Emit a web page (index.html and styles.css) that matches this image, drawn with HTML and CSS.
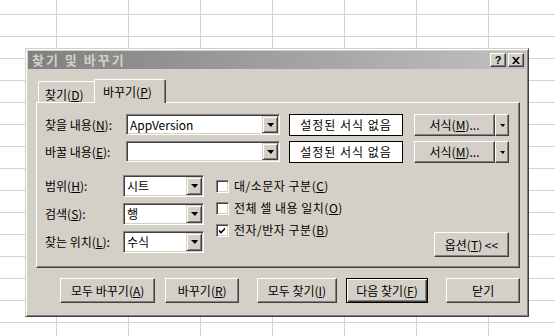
FILE: index.html
```html
<!DOCTYPE html>
<html>

<head>
    <meta charset="UTF-8">
    <title>찾기 및 바꾸기</title>
    <link rel="stylesheet" href="styles.css">
</head>

<body>
    <div class="dialog">
        <div class="titlebar">
            <span class="title">찾기 및 바꾸기</span>
            <div class="caption-buttons">
                <span class="cap-btn help">?</span>
                <span class="cap-btn close">
                    <svg width="8" height="7" viewBox="0 0 8 7">
                        <path d="M0 0h2l2 2.3 2-2.3h2l-3 3.5 3 3.5h-2l-2-2.3-2 2.3h-2l3-3.5z" fill="#000" />
                    </svg>
                </span>
            </div>
        </div>

        <div class="content">
            <div class="tabs">
                <div class="tab">찾기(<u>D</u>)</div>
                <div class="tab active">바꾸기(<u>P</u>)</div>
            </div>

            <div class="panel">
                <div class="field-row">
                    <span class="field-label">찾을 내용(<u>N</u>):</span>
                    <div class="combo combo-wide">
                        <span class="combo-text">AppVersion</span>
                        <span class="drop-btn"><i class="tri"></i></span>
                    </div>
                    <div class="format-preview">설정된 서식 없음</div>
                    <div class="split">
                        <span class="btn format-btn"><span>서식(<u>M</u>)...</span></span>
                        <span class="btn split-arrow"><i class="tri tri-small"></i></span>
                    </div>
                </div>
                <div class="field-row second">
                    <span class="field-label">바꿀 내용(<u>E</u>):</span>
                    <div class="combo combo-wide">
                        <span class="combo-text"></span>
                        <span class="drop-btn"><i class="tri"></i></span>
                    </div>
                    <div class="format-preview">설정된 서식 없음</div>
                    <div class="split">
                        <span class="btn format-btn"><span>서식(<u>M</u>)...</span></span>
                        <span class="btn split-arrow"><i class="tri tri-small"></i></span>
                    </div>
                </div>

                <div class="options">
                    <div class="option-grid">
                        <span class="opt-label">범위(<u>H</u>):</span>
                        <div class="combo combo-small">
                            <span class="combo-text">시트</span>
                            <span class="drop-btn"><i class="tri"></i></span>
                        </div>
                        <span class="opt-label">검색(<u>S</u>):</span>
                        <div class="combo combo-small">
                            <span class="combo-text">행</span>
                            <span class="drop-btn"><i class="tri"></i></span>
                        </div>
                        <span class="opt-label">찾는 위치(<u>L</u>):</span>
                        <div class="combo combo-small">
                            <span class="combo-text">수식</span>
                            <span class="drop-btn"><i class="tri"></i></span>
                        </div>
                    </div>

                    <div class="checks">
                        <div class="check-row">
                            <span class="checkbox"></span>
                            <span>대/소문자 구분(<u>C</u>)</span>
                        </div>
                        <div class="check-row">
                            <span class="checkbox"></span>
                            <span>전체 셀 내용 일치(<u>O</u>)</span>
                        </div>
                        <div class="check-row">
                            <span class="checkbox">
                                <svg width="9" height="9" viewBox="0 0 9 9">
                                    <path d="M1 3.5l2 2 4-4v2.2l-4 4-2-2z" fill="#000" />
                                </svg>
                            </span>
                            <span>전자/반자 구분(<u>B</u>)</span>
                        </div>
                    </div>

                    <span class="btn options-btn"><span>옵션(<u>T</u>) &lt;&lt;</span></span>
                </div>
            </div>

            <div class="actions">
                <span class="btn action w97"><span>모두 바꾸기(<u>A</u>)</span></span>
                <span class="btn action w75 gap10"><span>바꾸기(<u>R</u>)</span></span>
                <span class="btn action w81 gap18"><span>모두 찾기(<u>I</u>)</span></span>
                <span class="btn action default w84 gap9"><span>다음 찾기(<u>F</u>)</span></span>
                <span class="btn action w75 gap18"><span>닫기</span></span>
            </div>
        </div>
    </div>
</body>

</html>
```

FILE: styles.css
```css
/* Spreadsheet behind the dialog */
html,
body {
    margin: 0;
    height: 336px;
    overflow: hidden;
}

body {
    background-color: #ffffff;
    background-image:
        linear-gradient(to right, #d4d4d4 1px, transparent 1px),
        linear-gradient(to bottom, #d4d4d4 1px, transparent 1px);
    background-size: 72px 22px;
    background-position: 56px 14px;
    font-family: "Noto Sans CJK KR", "Noto Sans", sans-serif;
    font-size: 12px;
    line-height: 14px;
    color: #000000;
}

u {
    text-decoration: underline;
    text-underline-offset: 1px;
}

/* Window frame */
.dialog {
    width: 504px;
    height: 269px;
    box-sizing: border-box;
    margin: 48px 0 0 25px;
    background: #d4d0c8;
    border: 1px solid;
    border-color: #d4d0c8 #404040 #404040 #d4d0c8;
    box-shadow: inset 1px 1px #ffffff, inset -1px -1px #808080;
    padding: 2px;
}

.titlebar {
    height: 18px;
    background: linear-gradient(to right, #808080, #c0c0c0);
    display: flex;
    align-items: center;
    justify-content: space-between;
    padding: 0 2px 0 4px;
}

.title {
    color: #d4d0c8;
    font-weight: bold;
    font-size: 13px;
    letter-spacing: 2px;
}

.caption-buttons {
    display: flex;
    gap: 2px;
}

.cap-btn {
    width: 16px;
    height: 14px;
    box-sizing: border-box;
    background: #d4d0c8;
    border: 1px solid;
    border-color: #ffffff #404040 #404040 #ffffff;
    box-shadow: inset -1px -1px #808080;
    display: flex;
    align-items: center;
    justify-content: center;
}

.help {
    font-family: "Liberation Sans", Arial, sans-serif;
    font-weight: bold;
    font-size: 11px;
}

.content {
    padding: 10px 6px 0 8px;
}

/* Tabs */
.tabs {
    display: flex;
    align-items: flex-end;
    height: 24px;
    margin-bottom: -1px;
    padding-left: 2px;
    position: relative;
    z-index: 1;
}

.tab {
    box-sizing: border-box;
    background: #d4d0c8;
    border-top: 1px solid #ffffff;
    border-left: 1px solid #ffffff;
    border-top-left-radius: 2px;
    width: 56px;
    height: 21px;
    margin-bottom: 1px;
    padding: 6px 0 0 6px;
}

.tab.active {
    width: 72px;
    height: 24px;
    margin-bottom: 0;
    padding: 5px 0 0 8px;
    border-right: 1px solid #404040;
    border-top-right-radius: 2px;
    box-shadow: inset -1px 0 #808080;
}

/* Tab page */
.panel {
    width: 484px;
    height: 166px;
    box-sizing: border-box;
    border: 1px solid;
    border-color: #ffffff #404040 #404040 #ffffff;
    box-shadow: inset -1px -1px #808080;
    padding: 11px 10px 0 8px;
}

.field-row {
    display: flex;
    align-items: center;
    height: 22px;
}

.field-row.second {
    margin-top: 5px;
}

.field-label {
    width: 81px;
    flex: none;
}

/* Sunken combo boxes */
.combo {
    box-sizing: border-box;
    background: #ffffff;
    border: 1px solid;
    border-color: #808080 #ffffff #ffffff #808080;
    box-shadow: inset 1px 1px #404040, inset -1px -1px #d4d0c8;
    padding: 1px;
    display: flex;
    align-items: stretch;
    flex: none;
}

.combo-wide {
    width: 154px;
    height: 21px;
    align-self: flex-start;
}

.combo-small {
    width: 81px;
    height: 22px;
}

.combo-text {
    flex: 1;
    padding-left: 2px;
    line-height: 17px;
    white-space: nowrap;
}

.drop-btn {
    width: 16px;
    box-sizing: border-box;
    background: #d4d0c8;
    border: 1px solid;
    border-color: #d4d0c8 #404040 #404040 #d4d0c8;
    box-shadow: inset 1px 1px #ffffff, inset -1px -1px #808080;
    display: flex;
    align-items: center;
    justify-content: center;
}

.tri {
    display: block;
    width: 0;
    height: 0;
    border-top: 4px solid #000000;
    border-left: 4px solid transparent;
    border-right: 3px solid transparent;
}

.tri-small {
    border-top-width: 3px;
    border-left-width: 3px;
    border-right-width: 2px;
}

.format-preview {
    width: 114px;
    height: 22px;
    box-sizing: border-box;
    margin-left: 9px;
    background: #ffffff;
    border: 1px solid #000000;
    display: flex;
    align-items: center;
    justify-content: center;
    letter-spacing: 1px;
    flex: none;
}

/* Raised buttons */
.btn {
    box-sizing: border-box;
    background: #d4d0c8;
    border: 1px solid;
    border-color: #ffffff #404040 #404040 #ffffff;
    box-shadow: inset -1px -1px #808080;
    display: flex;
    align-items: center;
    justify-content: center;
    white-space: nowrap;
}

.split {
    display: flex;
    margin-left: 11px;
    height: 22px;
}

.format-btn {
    width: 81px;
}

.split-arrow {
    width: 14px;
}

/* Search options */
.options {
    display: flex;
    margin-top: 12px;
}

.option-grid {
    display: grid;
    grid-template-columns: 78px 81px;
    grid-auto-rows: 22px;
    row-gap: 6px;
    align-items: center;
}

.checks {
    margin-left: 12px;
    display: flex;
    flex-direction: column;
}

.check-row {
    height: 22px;
    display: flex;
    align-items: center;
    gap: 5px;
    letter-spacing: 0.5px;
}

.checkbox {
    width: 13px;
    height: 13px;
    box-sizing: border-box;
    background: #ffffff;
    border: 1px solid;
    border-color: #808080 #ffffff #ffffff #808080;
    box-shadow: inset 1px 1px #404040, inset -1px -1px #d4d0c8;
    display: flex;
    align-items: center;
    justify-content: center;
    flex: none;
}

.options-btn {
    margin-left: auto;
    align-self: flex-end;
    margin-bottom: -4px;
    width: 75px;
    height: 25px;
}

/* Dialog buttons */
.actions {
    display: flex;
    margin: 10px 0 0 24px;
}

.action {
    height: 25px;
}

.action.default {
    border-color: #000000;
    box-shadow: inset 1px 1px #ffffff, inset -1px -1px #404040, inset -2px -2px #808080;
}

.w97 { width: 97px; }
.w75 { width: 75px; }
.w81 { width: 81px; }
.w84 { width: 84px; }

.gap9 { margin-left: 9px; }
.gap10 { margin-left: 10px; }
.gap18 { margin-left: 18px; }
```
